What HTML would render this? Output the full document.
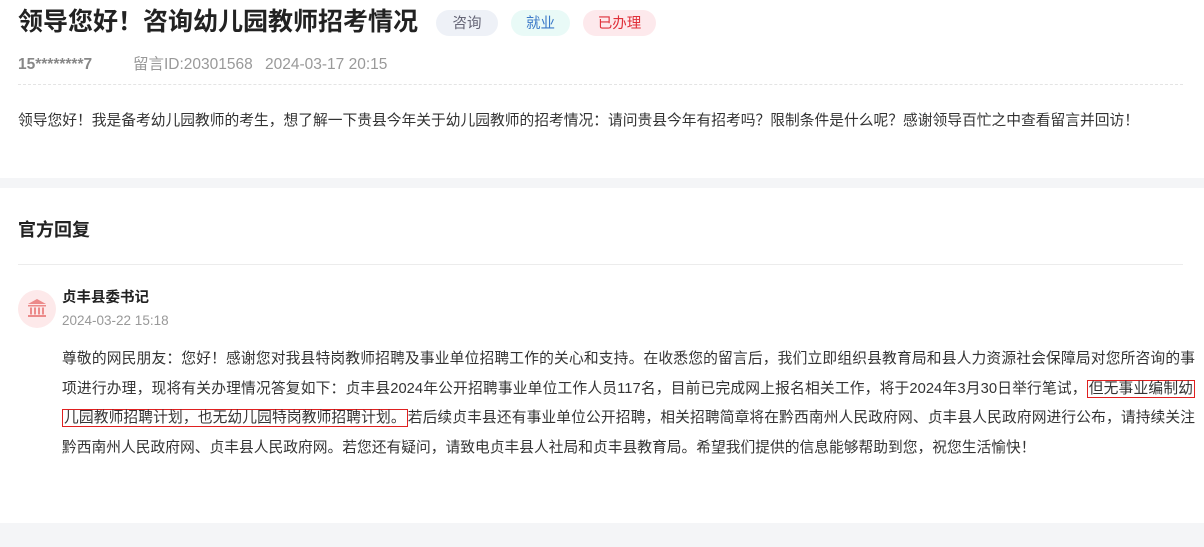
<!DOCTYPE html>
<html><head><meta charset="utf-8"><style>
*{margin:0;padding:0;box-sizing:border-box}
body{width:1204px;height:547px;background:#fff;font-family:"Liberation Sans","Noto Sans CJK SC",sans-serif;color:#333;overflow:hidden;position:relative}
.abs{position:absolute;white-space:nowrap}
.title{left:18px;top:5px;font-size:25px;font-weight:bold;color:#222;line-height:34px}
.tag{top:10px;height:26px;line-height:28px;border-radius:13px;font-size:14.5px;text-align:center}
.meta{top:55px;font-size:15.5px;color:#999;line-height:20px}
.q{left:18px;top:111px;font-size:14.75px;line-height:20px;color:#333}
.band{position:absolute;left:0;width:1204px;background:#f4f5f7}
.reply{position:absolute;left:62px;top:345px;width:1133px;font-size:14.75px;line-height:29.5px;color:#333;text-align:justify}
.hl{border:1px solid #e02020;padding:0 1px;-webkit-box-decoration-break:clone;box-decoration-break:clone}
</style></head><body>
<div class="abs title">领导您好！咨询幼儿园教师招考情况</div>
<div class="abs tag" style="left:436px;width:62px;background:#eef1f7;color:#667">咨询</div>
<div class="abs tag" style="left:511px;width:59px;background:#e9faf7;color:#3a78c8">就业</div>
<div class="abs tag" style="left:583px;width:73px;background:#fde9ec;color:#e0303a">已办理</div>
<div class="abs meta" style="left:18px;font-weight:bold;color:#888">15********7</div>
<div class="abs meta" style="left:133px">留言ID:20301568</div>
<div class="abs meta" style="left:265px">2024-03-17 20:15</div>
<div style="position:absolute;left:18px;top:84px;width:1165px;border-top:1px dashed #e4e4e4"></div>
<div class="abs q">领导您好！我是备考幼儿园教师的考生，想了解一下贵县今年关于幼儿园教师的招考情况：请问贵县今年有招考吗？限制条件是什么呢？感谢领导百忙之中查看留言并回访！</div>
<div class="band" style="top:178px;height:10px"></div>
<div class="abs" style="left:18px;top:218px;font-size:18px;font-weight:bold;color:#222;line-height:24px">官方回复</div>
<div style="position:absolute;left:18px;top:264px;width:1165px;border-top:1px solid #ececec"></div>
<div style="position:absolute;left:18px;top:290px;width:38px;height:38px;border-radius:50%;background:#fde9ea"></div>
<svg style="position:absolute;left:26px;top:297px" width="22" height="22" viewBox="0 0 22 22" fill="#ec8a8a"><path d="M11 2L2 7h18z"/><rect x="2" y="8" width="18" height="1.5"/><rect x="4" y="10.5" width="2" height="7"/><rect x="8" y="10.5" width="2" height="7"/><rect x="12" y="10.5" width="2" height="7"/><rect x="16" y="10.5" width="2" height="7"/><rect x="2" y="18" width="18" height="2"/></svg>
<div class="abs" style="left:62px;top:288px;font-size:14.5px;font-weight:bold;color:#222;line-height:20px">贞丰县委书记</div>
<div class="abs" style="left:62px;top:311px;font-size:13.5px;color:#999;line-height:20px">2024-03-22 15:18</div>
<div class="reply">尊敬的网民朋友：您好！感谢您对我县特岗教师招聘及事业单位招聘工作的关心和支持。在收悉您的留言后，我们立即组织县教育局和县人力资源社会保障局对您所咨询的事项进行办理，现将有关办理情况答复如下：贞丰县2024年公开招聘事业单位工作人员117名，目前已完成网上报名相关工作，将于2024年3月30日举行笔试，<span class="hl">但无事业编制幼儿园教师招聘计划，也无幼儿园特岗教师招聘计划。</span>若后续贞丰县还有事业单位公开招聘，相关招聘简章将在黔西南州人民政府网、贞丰县人民政府网进行公布，请持续关注黔西南州人民政府网、贞丰县人民政府网。若您还有疑问，请致电贞丰县人社局和贞丰县教育局。希望我们提供的信息能够帮助到您，祝您生活愉快！</div>
<div class="band" style="top:523px;height:24px"></div>
</body></html>
